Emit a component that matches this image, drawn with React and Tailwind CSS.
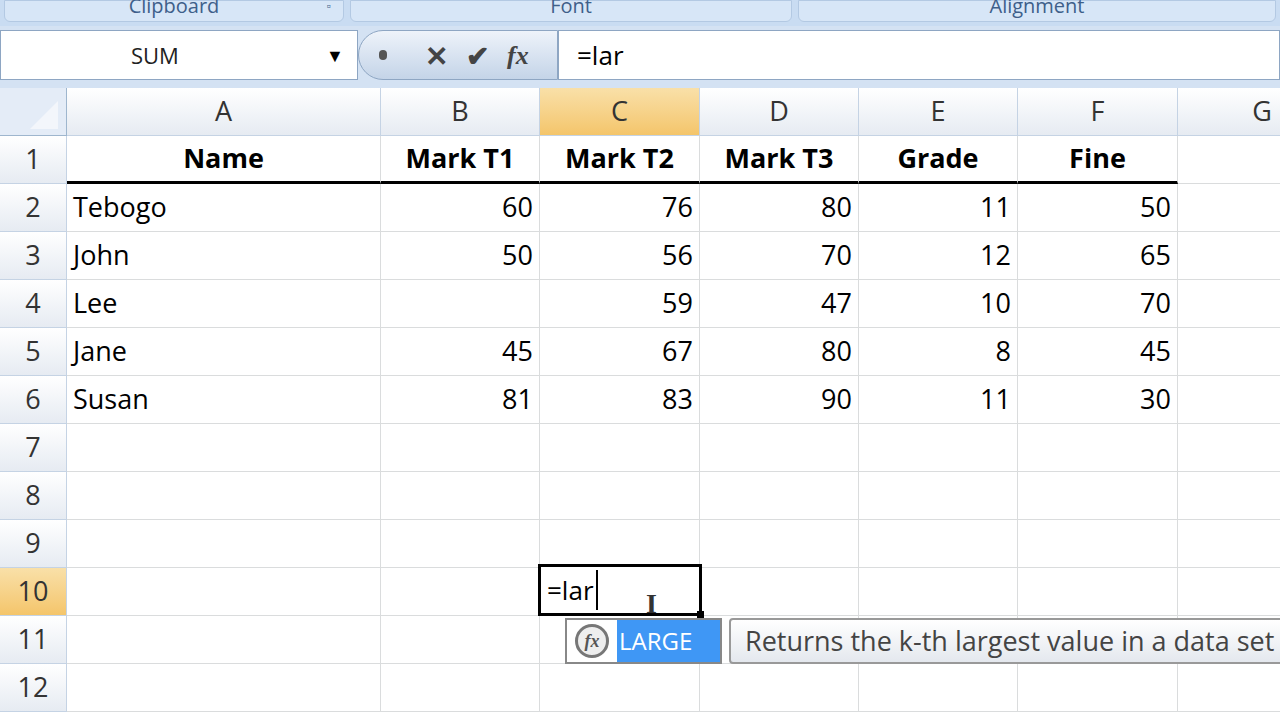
const cols = [
  { k: "A", w: 314 }, { k: "B", w: 159 }, { k: "C", w: 160 }, { k: "D", w: 159 },
  { k: "E", w: 159 }, { k: "F", w: 160 }, { k: "G", w: 169 },
];
const data = [
  ["Name", "Mark T1", "Mark T2", "Mark T3", "Grade", "Fine", ""],
  ["Tebogo", "60", "76", "80", "11", "50", ""],
  ["John", "50", "56", "70", "12", "65", ""],
  ["Lee", "", "59", "47", "10", "70", ""],
  ["Jane", "45", "67", "80", "8", "45", ""],
  ["Susan", "81", "83", "90", "11", "30", ""],
];
const tmpl = "67px 314px 159px 160px 159px 159px 160px 169px";

export default function App() {
  const rows = Array.from({ length: 12 }, (_, i) => i + 1);
  return (
    <div className="w-[1280px] h-[720px] overflow-hidden bg-white relative" style={{ fontFamily: "'Open Sans','Liberation Sans',sans-serif" }}>
      <div className="h-[26px] bg-[#c9dcf2] flex gap-[6px] px-[4px] items-end pb-[4px]">
        <div className="w-[340px] h-[22px] bg-[#d7e6f7] border border-[#b3c9e3] rounded-b-md text-center text-[20px] leading-[10px] text-[#3e5f8a] relative">Clipboard<span className="absolute right-[12px] top-0 text-[12px]">▫</span></div>
        <div className="w-[442px] h-[22px] bg-[#d7e6f7] border border-[#b3c9e3] rounded-b-md text-center text-[20px] leading-[10px] text-[#3e5f8a]">Font</div>
        <div className="flex-1 h-[22px] bg-[#d7e6f7] border border-[#b3c9e3] rounded-b-md text-center text-[20px] leading-[10px] text-[#3e5f8a]">Alignment</div>
      </div>
      <div className="h-[62px] bg-[#d4e2f3] pt-[4px] pb-[6px] flex">
        <div className="w-[358px] h-[50px] bg-white border border-[#8ea6c3] flex items-center relative">
          <span className="ml-[130px] text-[22px] text-[#222]">SUM</span>
          <span className="absolute left-[325px] text-[18px]">▼</span>
        </div>
        <div className="w-[200px] h-[50px] bg-gradient-to-b from-[#eef3fa] to-[#c4d4e8] border border-[#8ea6c3] rounded-l-[28px] flex items-center gap-[18px] pl-[20px]">
          <span className="w-[8px] h-[10px] rounded-full bg-[#555]"></span>
          <span className="text-[28px] text-[#444] font-bold ml-[20px]">✕</span>
          <span className="text-[28px] text-[#444] font-bold">✔</span>
          <span className="text-[26px] text-[#444] italic font-bold" style={{ fontFamily: "'Liberation Serif',serif" }}>fx</span>
        </div>
        <div className="flex-1 h-[50px] bg-white border border-[#8ea6c3] flex items-center pl-[18px] text-[26px]">=lar</div>
      </div>
      <div className="grid" style={{ gridTemplateColumns: tmpl }}>
        <div className="h-[48px] bg-[#e4ecf7] border-r border-b border-[#9eb6ce] relative overflow-hidden">
          <div className="absolute right-[8px] bottom-[6px] w-0 h-0 border-l-[28px] border-l-transparent border-b-[28px] border-b-[#f3f6fb]"></div>
        </div>
        {cols.map(c => (
          <div key={c.k} className={`h-[48px] flex items-center justify-center text-[27px] border-r border-b border-[#c5d3e4] ${c.k === "C" ? "bg-gradient-to-b from-[#f9e0a8] to-[#f4c56a] text-[#333]" : "bg-gradient-to-b from-white to-[#e6ebf2] text-[#333]"}`}>{c.k}</div>
        ))}
        {rows.map(r => (
          <>
            <div key={"h" + r} className={`h-[48px] flex items-center justify-center text-[27px] border-b border-r border-[#c5d3e4] ${r === 10 ? "bg-gradient-to-b from-[#f9e0a8] to-[#f4c56a]" : "bg-gradient-to-b from-white to-[#e6ebf2]"} text-[#333]`}>{r}</div>
            {cols.map((c, ci) => {
              const v = data[r - 1] ? data[r - 1][ci] : "";
              const head = r === 1;
              const thick = head && ci < 6;
              return (
                <div key={r + c.k} className={`h-[48px] flex items-center px-[6px] text-[27px] text-black border-r border-[#dadcdd] ${thick ? "border-b-[3px] border-b-black" : "border-b border-b-[#dadcdd]"} ${head ? "justify-center font-bold" : ci === 0 ? "justify-start" : "justify-end"}`}>{v}</div>
              );
            })}
          </>
        ))}
      </div>
      <div className="absolute left-[538px] top-[564px] w-[164px] h-[52px] border-[3px] border-black bg-white flex items-center pl-[6px] text-[26px]">
        =lar<span className="w-[2px] h-[40px] bg-black ml-[2px]"></span>
        <span className="absolute right-[-5px] bottom-[-5px] w-[7px] h-[7px] bg-black"></span>
      </div>
      <div className="absolute left-[646px] top-[590px] text-[28px] leading-none font-bold text-[#333]" style={{ fontFamily: "'Liberation Serif',serif" }}>I</div>
      <div className="absolute left-[565px] top-[618px] w-[157px] h-[46px] border-2 border-[#888] bg-white flex items-center">
        <div className="w-[50px] flex items-center justify-center">
          <div className="w-[34px] h-[34px] rounded-full border-[3px] border-[#777] bg-[#eee] flex items-center justify-center italic font-bold text-[#555] text-[18px]" style={{ fontFamily: "'Liberation Serif',serif" }}>fx</div>
        </div>
        <div className="flex-1 h-full bg-[#3f97f5] text-white text-[24px] flex items-center pl-[2px]">LARGE</div>
      </div>
      <div className="absolute left-[729px] top-[618px] w-[600px] h-[46px] border-2 border-[#999] rounded-[4px] bg-gradient-to-b from-white to-[#e4e8ee] flex items-center pl-[14px] text-[27px] text-[#444] whitespace-nowrap">Returns the k-th largest value in a data set</div>
    </div>
  );
}
